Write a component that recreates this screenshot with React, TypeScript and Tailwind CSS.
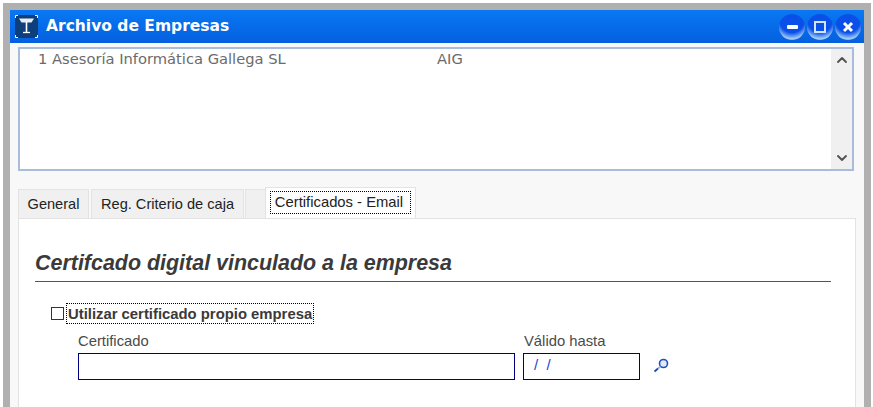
import { ChevronDown, ChevronUp } from "lucide-react"

const FONT = "font-['Liberation_Sans',Arial,sans-serif]"

function WinButton({ children }: { children: React.ReactNode }) {
  return (
    <div className="flex h-[26px] w-[26px] items-center justify-center rounded-full bg-[radial-gradient(circle_at_50%_25%,#0a50e8_0%,#0a50e8_52%,#a3cdf6_78%,#3b8af0_92%)]">
      {children}
    </div>
  )
}

export default function App() {
  return (
    <div className={`h-[407px] w-[873px] overflow-hidden bg-white pl-[3px] pr-[2px] pt-[3px] ${FONT}`}>
      <div className="h-full w-full bg-[#b0b0b0] pl-[7px] pr-[7px] pt-[7px]">
        <div className="flex h-full flex-col bg-[#f8f8f8]">
          {/* Title bar */}
          <div className="flex h-[33px] shrink-0 items-center justify-between bg-gradient-to-b from-[#0a78f2] to-[#0560e0] pl-[5px] pr-[3px]">
            <div className="flex items-center gap-[8px]">
              <div className="h-[23px] w-[23px] bg-[#0d3f7c]">
                <svg width="23" height="23" viewBox="0 0 23 23" fill="none">
                  <path d="M4 3.5h15l-2.5 4h-10z" fill="#e8eef6" />
                  <path d="M11.5 7v10" stroke="#fff" strokeWidth="1.6" />
                  <path d="M8 17.5h7" stroke="#fff" strokeWidth="1.3" />
                  <path d="M.5 3V.5H3M20 .5h2.5V3M.5 20v2.5H3M20 22.5h2.5V20" stroke="#fff" strokeWidth="1" />
                </svg>
              </div>
              <span className="pt-px font-['DejaVu_Sans',sans-serif] text-[15.5px] font-bold text-white">Archivo de Empresas</span>
            </div>
            <div className="flex items-center gap-[2px]">
              <WinButton>
                <div className="h-[4px] w-[11px] rounded-[1px] bg-white" />
              </WinButton>
              <WinButton>
                <div className="h-[12px] w-[12px] border-2 border-[#cfe6ff]" />
              </WinButton>
              <WinButton>
                <svg width="12" height="12" viewBox="0 0 12 12">
                  <path d="M2 2l8 8M10 2l-8 8" stroke="#fff" strokeWidth="3" />
                </svg>
              </WinButton>
            </div>
          </div>

          {/* List */}
          <div className="ml-[8px] mr-[10px] mt-[4px] flex h-[124px] shrink-0 border-2 border-[#a9bcd9] bg-white">
            <div className="flex-1 pl-[18px] pt-[1px] font-['DejaVu_Sans',sans-serif] text-[14.7px] leading-[18px] text-[#6b6b6b]">
              <div className="flex">
                <span className="w-[399px]">1 Asesoría Informática Gallega SL</span>
                <span>AIG</span>
              </div>
            </div>
            <div className="flex w-[21px] flex-col items-center justify-between bg-[#f0f0f0] pb-[3px] pt-[3px] text-[#505050]">
              <ChevronUp size={16} strokeWidth={2.75} />
              <ChevronDown size={16} strokeWidth={2.75} />
            </div>
          </div>

          {/* Tabs */}
          <div className="mx-[8px] mt-[16px] flex h-[32px] shrink-0 items-end text-[14.6px] text-[#222]">
            <div className="flex h-[30px] w-[71px] items-center justify-center border-x border-t border-[#e3e3e3] bg-[#f0f0f0]">General</div>
            <div className="ml-[2px] flex h-[30px] w-[153px] items-center justify-center border-x border-t border-[#e3e3e3] bg-[#f0f0f0]">Reg. Criterio de caja</div>
            <div className="ml-[1px] h-[30px] w-[20px] border-l border-t border-[#e3e3e3] bg-[#f0f0f0]" />
            <div className="flex h-[32px] w-[151px] items-start justify-center border-x border-t border-[#e3e3e3] bg-white pt-[3px]">
              <span className="flex h-[23px] w-[141px] items-center justify-center border border-dotted border-black pr-[3px] text-[14.8px]">Certificados - Email</span>
            </div>
          </div>

          {/* Tab panel */}
          <div className="mx-[8px] -mt-px flex-1 border-x border-t border-[#e3e3e3] bg-white">
            <div className="ml-[16px] mr-[24px] mt-[31px] border-b border-[#555] pb-[5px]">
              <h1 className="text-[21.45px] font-bold italic leading-[26px] text-[#3a3a3a]">Certifcado digital vinculado a la empresa</h1>
            </div>
            <div className="ml-[32px] mt-[21px] flex items-center">
              <div className="h-[13px] w-[13px] border border-[#333] bg-white" />
              <span className="ml-[2px] border border-dotted border-black px-px pt-px text-[14.85px] font-bold leading-[18px] text-[#3a3a3a]">Utilizar certificado propio empresa</span>
            </div>
            <div className="ml-[59px] mt-[8px] flex items-start">
              <div className="w-[437px]">
                <div className="text-[14.8px] leading-[18px] text-[#4a4a4a]">Certificado</div>
                <div className="mt-[3px] h-[27px] border border-[#000080] bg-white" />
              </div>
              <div className="ml-[8px] w-[117px]">
                <div className="pl-px text-[14.8px] leading-[18px] text-[#4a4a4a]">Válido hasta</div>
                <div className="mt-[3px] h-[27px] whitespace-pre border border-[#000080] bg-white pl-[10px] text-[15px] leading-[22px] text-[#2a3fd0]">/  /</div>
              </div>
              <svg className="ml-[13px] mt-[25px]" width="17" height="17" viewBox="0 0 17 17" fill="none">
                <circle cx="10.5" cy="6.5" r="4" fill="#e4e8ef" stroke="#1d50c8" strokeWidth="1.6" />
                <path d="M7.5 9.5 5 11.5" stroke="#9fb4d8" strokeWidth="1.8" />
                <path d="M5 11.5 1.5 14.5" stroke="#1746c0" strokeWidth="1.8" />
              </svg>
            </div>
          </div>
        </div>
      </div>
    </div>
  )
}
